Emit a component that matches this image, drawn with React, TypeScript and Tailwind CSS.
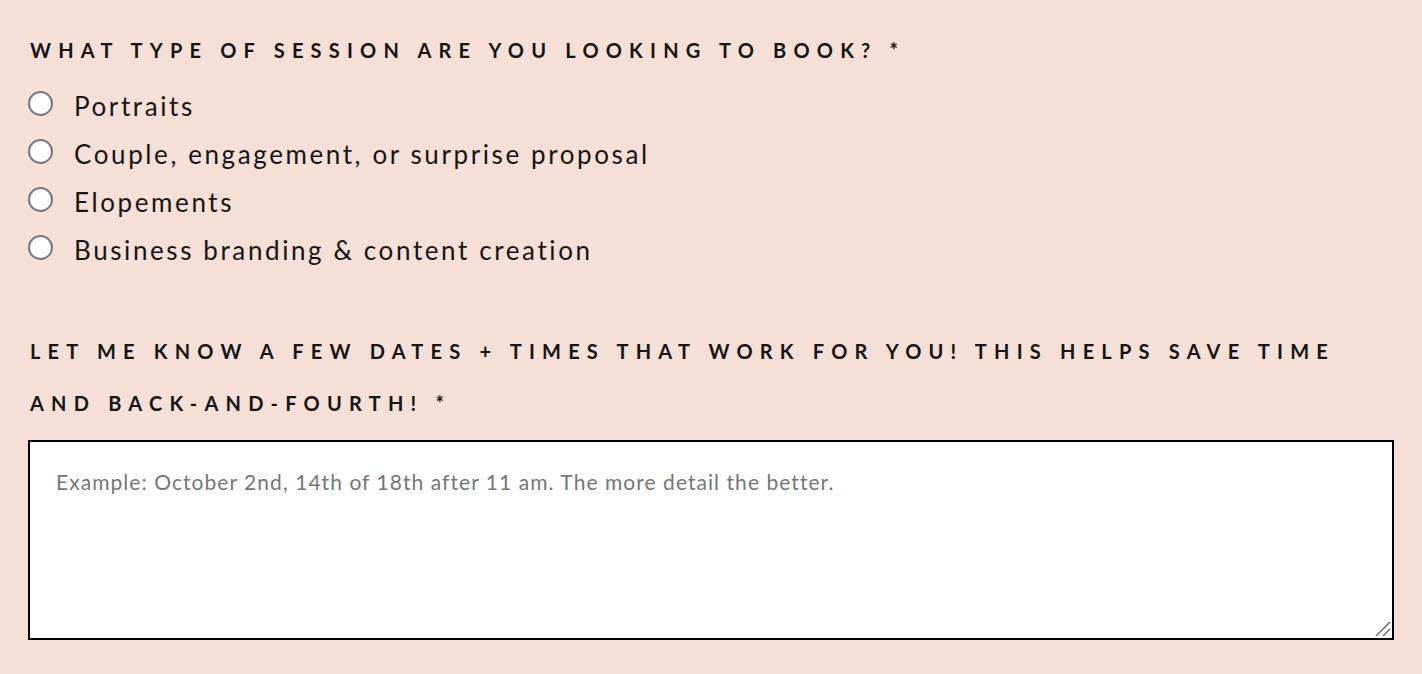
export default function App() {
  const options = [
    "Portraits",
    "Couple, engagement, or surprise proposal",
    "Elopements",
    "Business branding & content creation",
  ];

  return (
    <div className="min-h-[674px] w-full bg-[#f6dfd6] pl-[28px] pr-[28px] pt-[30px] font-['Lato',sans-serif] text-[#151515]">
      {/* session type question */}
      <fieldset>
        <legend className="text-[20px] leading-[40px] font-bold uppercase tracking-[0.36em] pl-[2px]">
          What type of session are you looking to book? *
        </legend>
        <div className="mt-[9px] flex flex-col">
          {options.map((option) => (
            <label key={option} className="flex h-[48px] items-center">
              <span className="h-[25px] w-[25px] rounded-full border-2 border-[#777777] bg-white" />
              <span className="ml-[21px] pt-[7px] text-[26px] tracking-[0.1em]">{option}</span>
            </label>
          ))}
        </div>
      </fieldset>

      {/* dates question */}
      <div className="mt-[54px]">
        <p className="text-[20px] leading-[52px] font-bold uppercase tracking-[0.36em] pl-[2px]">
          Let me know a few dates + times that work for you! This helps save time
          <br />
          and back-and-fourth! *
        </p>
        <div className="relative mt-[11px]">
          <textarea
            className="block h-[200px] w-full resize-none border-2 border-black bg-white px-[26px] pt-[26px] text-[21px] leading-[28px] tracking-[0.05em] font-['Lato',sans-serif] text-black placeholder:text-[#767676] outline-none"
            placeholder="Example: October 2nd, 14th of 18th after 11 am. The more detail the better."
          />
          {/* resize grip */}
          <svg
            className="pointer-events-none absolute bottom-[3px] right-[3px] h-[16px] w-[16px]"
            viewBox="0 0 16 16"
            fill="none"
            stroke="#6b6b6b"
            strokeWidth="1.5"
          >
            <line x1="1" y1="15" x2="15" y2="1" />
            <line x1="8" y1="15" x2="15" y2="8" />
          </svg>
        </div>
      </div>
    </div>
  );
}
